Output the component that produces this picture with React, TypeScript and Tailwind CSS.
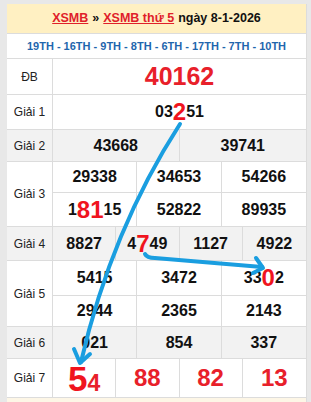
import React from "react";

type Part = { t: string; big?: boolean };

const ROW = "flex border-b border-[#dcdcdc]";
const LABEL =
  "w-[46px] shrink-0 border-r border-[#dcdcdc] flex items-center justify-center text-[12px] text-[#222]";

// a number where some digits are highlighted bigger & red
function Num({ parts }: { parts: Part[] }) {
  return (
    <span className="inline-flex items-center text-[16px] font-bold text-[#111]">
      {parts.map((p, i) =>
        p.big ? (
          <span key={i} className="text-[24px] leading-none text-[#f0141e]">
            {p.t}
          </span>
        ) : (
          <span key={i}>{p.t}</span>
        )
      )}
    </span>
  );
}

function Cells({ items, cols, h }: { items: React.ReactNode[]; cols: 2 | 3 | 4; h: string }) {
  const grid = cols === 2 ? "grid-cols-2" : cols === 3 ? "grid-cols-3" : "grid-cols-4";
  return (
    <div className={`grid ${grid} divide-x divide-[#dcdcdc] ${h}`}>
      {items.map((it, i) => (
        <div key={i} className="flex items-center justify-center">
          {typeof it === "string" ? <Num parts={[{ t: it }]} /> : it}
        </div>
      ))}
    </div>
  );
}

export default function App() {
  return (
    <div className="relative w-[311px] h-[402px] overflow-hidden bg-[#e8e8e8] pt-[4px] pl-[7px] font-['Liberation_Sans',Arial,sans-serif]">
      <div className="w-[300px] bg-white border-r border-[#dcdcdc]">
        {/* header */}
        <div className="h-[30px] bg-[#fff0c2] border-b border-[#dcdcdc] flex items-center justify-center text-[12.5px] font-bold text-[#111]">
          <span className="text-[#e0202a] underline">XSMB</span>
          <span className="mx-[4px]">»</span>
          <span className="text-[#e0202a] underline">XSMB thứ 5</span>
          <span className="ml-[4px]">ngày 8-1-2026</span>
        </div>
        {/* dates */}
        <div className="h-[25px] border-b border-[#dcdcdc] flex items-center justify-center text-[11px] font-bold text-[#1f66ad]">
          19TH - 16TH - 9TH - 8TH - 6TH - 17TH - 7TH - 10TH
        </div>

        {/* ĐB */}
        <div className={`${ROW} h-[36px]`}>
          <div className={LABEL}>ĐB</div>
          <div className="flex-1 flex items-center justify-center text-[25px] font-bold text-[#e8202a]">
            40162
          </div>
        </div>

        {/* Giải 1 */}
        <div className={`${ROW} h-[35px]`}>
          <div className={LABEL}>Giải 1</div>
          <div className="flex-1 flex items-center justify-center">
            <Num parts={[{ t: "03" }, { t: "2", big: true }, { t: "51" }]} />
          </div>
        </div>

        {/* Giải 2 */}
        <div className={`${ROW} h-[32px] bg-[#f2f2f2]`}>
          <div className={LABEL}>Giải 2</div>
          <div className="flex-1">
            <Cells cols={2} h="h-full" items={["43668", "39741"]} />
          </div>
        </div>

        {/* Giải 3 */}
        <div className={`${ROW} h-[65px]`}>
          <div className={LABEL}>Giải 3</div>
          <div className="flex-1 flex flex-col">
            <div className="border-b border-[#dcdcdc]">
              <Cells cols={3} h="h-[30px]" items={["29338", "34653", "54266"]} />
            </div>
            <Cells
              cols={3}
              h="h-[34px]"
              items={[<Num parts={[{ t: "1" }, { t: "81", big: true }, { t: "15" }]} />, "52822", "89935"]}
            />
          </div>
        </div>

        {/* Giải 4 */}
        <div className={`${ROW} h-[34px] bg-[#f2f2f2]`}>
          <div className={LABEL}>Giải 4</div>
          <div className="flex-1">
            <Cells
              cols={4}
              h="h-full"
              items={["8827", <Num parts={[{ t: "4" }, { t: "7", big: true }, { t: "49" }]} />, "1127", "4922"]}
            />
          </div>
        </div>

        {/* Giải 5 */}
        <div className={`${ROW} h-[66px]`}>
          <div className={LABEL}>Giải 5</div>
          <div className="flex-1 flex flex-col">
            <div className="border-b border-[#dcdcdc]">
              <Cells
                cols={3}
                h="h-[34px]"
                items={["5415", "3472", <Num parts={[{ t: "33" }, { t: "0", big: true }, { t: "2" }]} />]}
              />
            </div>
            <Cells cols={3} h="h-[30px]" items={["2944", "2365", "2143"]} />
          </div>
        </div>

        {/* Giải 6 */}
        <div className={`${ROW} h-[32px] bg-[#f2f2f2]`}>
          <div className={LABEL}>Giải 6</div>
          <div className="flex-1">
            <Cells cols={3} h="h-full" items={["021", "854", "337"]} />
          </div>
        </div>

        {/* Giải 7 */}
        <div className={`${ROW} h-[39px]`}>
          <div className={LABEL}>Giải 7</div>
          <div className="flex-1 grid grid-cols-4 divide-x divide-[#dcdcdc] text-[24px] font-bold text-[#e8202a]">
            <div className="flex items-baseline justify-center pt-[2px]">
              <span className="text-[35px] leading-none text-[#f0141e]">5</span>
              <span className="text-[23px] leading-none">4</span>
            </div>
            <div className="flex items-center justify-center">88</div>
            <div className="flex items-center justify-center">82</div>
            <div className="flex items-center justify-center">13</div>
          </div>
        </div>
        <div className="h-[8px] bg-[#fdf6e6]" />
      </div>

      {/* blue arrows drawn over the table */}
      <svg className="absolute inset-0 pointer-events-none" width="311" height="402" viewBox="0 0 311 402">
        <g fill="none" stroke="#1a9ee0" strokeWidth="4" strokeLinecap="round" strokeLinejoin="round">
          <path d="M180 124 Q111.5 230 81 362" />
          <path d="M74 349 L80 363 L90 354" />
          <path d="M145 254 Q147 258 155 258 L262 267" />
          <path d="M256 258 L263 268 L253 273" />
        </g>
      </svg>
    </div>
  );
}
